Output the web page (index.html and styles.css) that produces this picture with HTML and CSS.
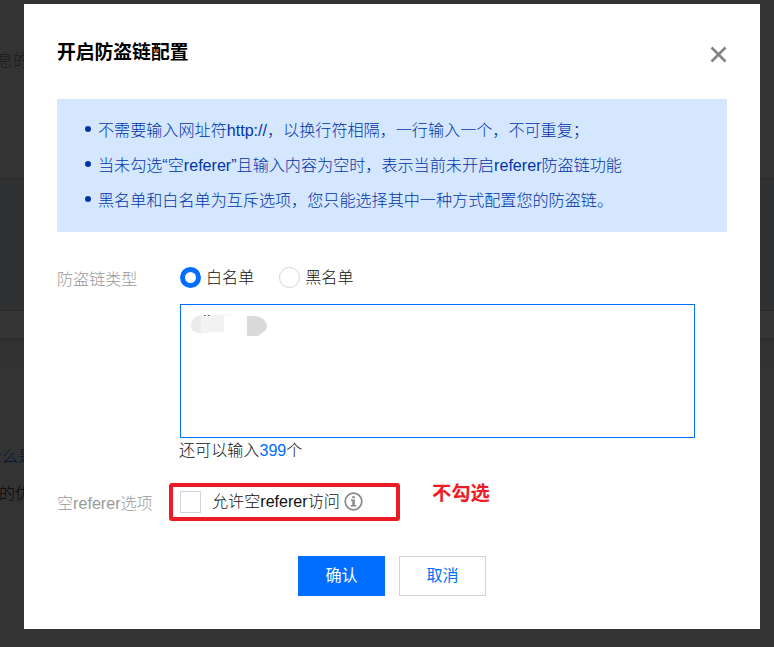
FILE: index.html
```html
<!DOCTYPE html>
<html lang="zh-CN">
<head>
<meta charset="utf-8">
<title>开启防盗链配置</title>
<link rel="stylesheet" href="styles.css">
</head>
<body>
<div class="backdrop">
  <div class="band band-top"></div>
  <div class="band band-panel"></div>
  <div class="band band-tabs"></div>
  <div class="band band-shadow"></div>
  <div class="band band-rest"></div>
  <span class="behind behind-desc">息的</span>
  <span class="behind behind-link">什么是</span>
  <span class="behind behind-text">的优</span>
</div>
<main class="dialog">
  <header class="head">
    <h1 class="title">开启防盗链配置</h1>
    <button class="close" aria-label="关闭">
      <svg width="17" height="17" viewBox="0 0 17 17"><path d="M1.500 1.500 15.500 15.500M15.500 1.500 1.500 15.500" fill="none" stroke="#828282" stroke-width="2.500"/></svg>
    </button>
  </header>
  <ul class="notice">
    <li><span>不需要输入网址符http://，以换行符相隔，一行输入一个，不可重复；</span></li>
    <li><span>当未勾选“空referer”且输入内容为空时，表示当前未开启referer防盗链功能</span></li>
    <li><span>黑名单和白名单为互斥选项，您只能选择其中一种方式配置您的防盗链。</span></li>
  </ul>
  <section class="row">
    <div class="label">防盗链类型</div>
    <div class="field">
      <div class="radios">
        <label class="radio"><i class="dot dot-on"></i>白名单</label>
        <label class="radio"><i class="dot"></i>黑名单</label>
      </div>
      <div class="input">
        <svg class="smudge" width="90" height="26" viewBox="0 0 90 26">
          <path d="M20 4.500H12Q1 5 1 15Q1 22 11 22.500L20 21Z" fill="#ebebeb"/>
          <path d="M11 4H34V20.500L11 22Z" fill="#f2f2f2"/>
          <path d="M26 4H44" stroke="#edf5fd"/>
          <path d="M14 4.500h1.500M18 4.500h1.500" stroke="#555"/>
          <path d="M57 5H66Q77 8 77 15Q77 19 72 22L68 25H57Z" fill="#dadada"/>
        </svg>
      </div>
      <p class="remain">还可以输入<b>399</b>个</p>
    </div>
  </section>
  <section class="row row-referer">
    <div class="label">空referer选项</div>
    <label class="check"><i class="box"></i><span>允许空referer访问</span>
      <svg class="info" width="19" height="19" viewBox="0 0 19 19"><circle cx="9.500" cy="9.500" r="8.300" fill="none" stroke="#888" stroke-width="1.700"/><path d="M8.200 4.200h2.600v2H8.200zM7 7.600h3.800v5.300h1.500v1.500H6.800v-1.500h1.500V9H7z" fill="#888"/></svg>
    </label>
    <svg class="mark-box" width="231" height="38"><rect x="2" y="2" width="227" height="34" rx="1" fill="none" stroke="#ed1c24" stroke-width="4"/></svg>
    <span class="mark-text">不勾选</span>
  </section>
  <footer class="actions">
    <button class="btn btn-primary">确认</button>
    <button class="btn">取消</button>
  </footer>
</main>
</body>
</html>
```
FILE: styles.css
```css
* { box-sizing: border-box; }
body {
  margin: 0;
  height: 647px;
  padding: 4px 14px 18px 24px;
  overflow: hidden;
  background: #333;
  font: 16.1px/24px "Liberation Sans", "Noto Sans CJK SC", sans-serif;
  font-weight: 300;
  color: #111;
}
h1, p, ul { margin: 0; padding: 0; }
i { font-style: normal; }
button { padding: 0; border: 0; background: none; font: inherit; }
.backdrop {
  position: absolute;
  inset: 0;
  display: flex;
  flex-direction: column;
  overflow: hidden;
}
.band-top { height: 178px; background: #333; }
.band-panel { height: 132px; background: #2f3032; border-top: 1px solid #2b2c2d; }
.band-tabs { height: 28px; background: #353535; border-top: 1px solid #2c2c2d; }
.band-shadow { height: 26px; background: linear-gradient(#292a2c, #323232 25%); border-bottom: 1px solid #2f2f2f; }
.band-rest { flex: 1; background: #333; }
.behind { position: absolute; white-space: nowrap; }
.behind-desc { left: -3px; top: 48px; color: #1b1b1b; }
.behind-link { left: -14px; top: 444px; color: #00173a; }
.behind-text { left: -1px; top: 481px; color: #080808; }
.dialog {
  position: relative;
  width: 736px;
  height: 625px;
  padding: 0 33px;
  background: #fff;
}
.head {
  display: flex;
  justify-content: space-between;
  height: 95px;
}
.title {
  margin-top: 35px;
  font-size: 18.800px;
  line-height: 28px;
  font-weight: 700;
  color: #000;
}
.close { width: 17px; height: 17px; margin-top: 42px; line-height: 0; }
.notice {
  height: 133px;
  padding: 13px 0 0 28px;
  background: #d5e7ff;
  color: #0034a8;
  list-style: none;
}
.notice li {
  display: flex;
  align-items: center;
  height: 35px;
  white-space: nowrap;
}
.notice li::before {
  content: "";
  width: 6px;
  height: 6px;
  margin: -2px 7px 0 0;
  border-radius: 50%;
  background: #0034a8;
}
.row { display: flex; }
.label { width: 123px; color: #999; padding-top: 35px; flex: none; }
.field { padding-top: 33px; }
.radios { display: flex; gap: 25px; height: 39px; }
.radio { display: flex; height: 24px; gap: 5px; align-items: center; }
.dot {
  width: 21px;
  height: 21px;
  border: 1px solid #cfd5de;
  border-radius: 50%;
}
.dot-on { border: 5px solid #006eff; }
.input {
  width: 515px;
  height: 134px;
  padding: 6px 0 0 9px;
  border: 1px solid #006eff;
}
.smudge { display: block; }
.remain { height: 25px; margin-left: -1px; }
.remain b { color: #006eff; font-weight: 400; }
.row-referer { position: relative; height: 61px; }
.row-referer .label { padding-top: 28px; }
.check { display: flex; align-items: center; height: 24px; margin-top: 26px; }
.box { width: 21px; height: 22px; margin: 1px 11px 0 0; border: 1px solid #cfd5de; }
.info { margin-left: 4px; }
.mark-box { position: absolute; left: 112px; top: 20px; }
.mark-text {
  position: absolute;
  left: 375px;
  top: 17px;
  font-size: 19.300px;
  line-height: 28px;
  font-weight: 700;
  color: #ed1c24;
}
.actions {
  display: flex;
  justify-content: center;
  gap: 14px;
  padding-top: 32px;
}
.btn {
  width: 87px;
  height: 40px;
  padding-bottom: 2px;
  border: 1px solid #cfd5de;
  color: #006eff;
  font-weight: 400;
}
.btn-primary { border-color: #006eff; background: #006eff; color: #fff; }
```
